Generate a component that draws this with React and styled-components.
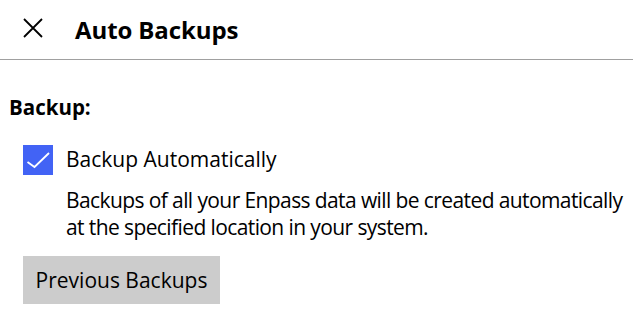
import React from "react";
import styled, { createGlobalStyle } from "styled-components";

const Global = createGlobalStyle`
  html, body { margin: 0; padding: 0; background: #fff; }
  body { font-family: "Open Sans", "Noto Sans", sans-serif; color: #000; }
`;

const Page = styled.div`
  width: 633px;
  height: 310px;
  overflow: hidden;
  background: #fff;
`;

const Header = styled.header`
  display: flex;
  align-items: center;
  height: 60px;
  border-bottom: 1px solid #a0a0a0;
  box-sizing: border-box;
  padding-left: 23px;
`;

const CloseButton = styled.button`
  all: unset;
  display: flex;
  width: 20px;
  height: 20px;
  margin-right: 32px;
  margin-top: -3px;
`;

const Title = styled.h1`
  margin: 0;
  font-size: 24px;
  font-weight: 700;
  letter-spacing: -0.1px;
`;

const Body = styled.main`
  display: flex;
  flex-direction: column;
  padding: 35px 0 0 9px;
`;

const SectionLabel = styled.h2`
  margin: 0;
  font-size: 20.5px;
  font-weight: 700;
  line-height: 24px;
`;

const Group = styled.div`
  display: flex;
  flex-direction: column;
  padding-left: 14px;
  margin-top: 26px;
`;

const CheckRow = styled.label`
  display: flex;
  align-items: center;
  gap: 13px;
  height: 30px;
`;

const Box = styled.span`
  display: flex;
  align-items: center;
  justify-content: center;
  width: 30px;
  height: 30px;
  background: ${(p) => (p.$checked ? "#4263f5" : "#fff")};
  flex-shrink: 0;
`;

const CheckText = styled.span`
  font-size: 21px;
  line-height: 28px;
  margin-top: -2px;
`;

const Description = styled.p`
  margin: 12px 0 0 43px;
  font-size: 21px;
  line-height: 27px;
  letter-spacing: -0.6px;
  width: 567px;
`;

const Button = styled.button`
  all: unset;
  display: inline-flex;
  align-items: center;
  justify-content: center;
  align-self: flex-start;
  width: 197px;
  height: 48px;
  margin-top: 15px;
  background: #cccccc;
  font-family: "Open Sans", "Noto Sans", sans-serif;
  font-size: 21px;
  color: #000;
`;

export default function App() {
  return (
    <Page>
      <Global />
      <Header>
        <CloseButton aria-label="Close">
          <svg width="20" height="20" viewBox="0 0 20 20">
            <path d="M1 1 L19 19 M19 1 L1 19" stroke="#000" strokeWidth="1.8" fill="none" />
          </svg>
        </CloseButton>
        <Title>Auto Backups</Title>
      </Header>
      <Body>
        <SectionLabel>Backup:</SectionLabel>
        <Group>
          <CheckRow>
            <Box $checked>
              <svg width="30" height="30" viewBox="0 0 30 30">
                <path d="M4.5 17 L11.5 22 L26 8" stroke="#fff" strokeWidth="1.8" fill="none" />
              </svg>
            </Box>
            <CheckText>Backup Automatically</CheckText>
          </CheckRow>
          <Description>
            Backups of all your Enpass data will be created automatically at the specified location in your system.
          </Description>
          <Button>Previous Backups</Button>
        </Group>
      </Body>
    </Page>
  );
}
